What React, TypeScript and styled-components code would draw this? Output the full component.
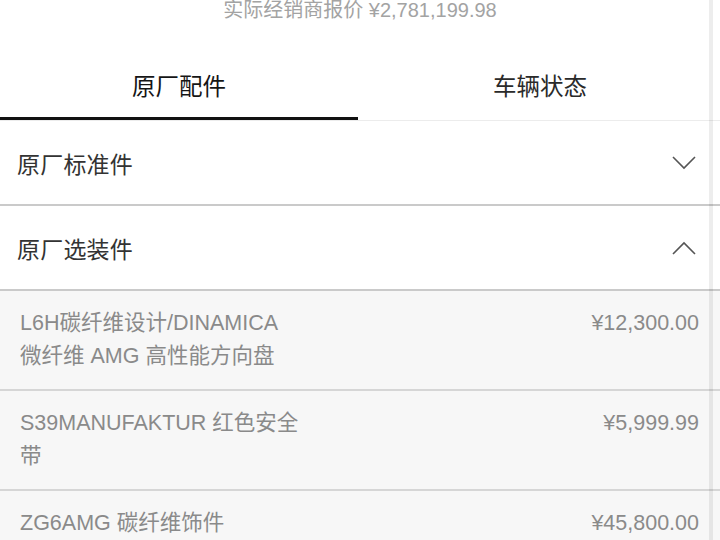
import React from "react";
import styled, { createGlobalStyle } from "styled-components";

const GlobalStyle = createGlobalStyle`
  html, body {
    margin: 0;
    padding: 0;
    background: #ffffff;
  }
  body {
    font-family: "Liberation Sans", "Noto Sans CJK SC", sans-serif;
    overflow: hidden;
  }
`;

const Page = styled.div`
  width: 720px;
  height: 540px;
  overflow: hidden;
  background: #ffffff;
  position: relative;
`;

const PriceLine = styled.div`
  text-align: center;
  font-size: 20px;
  line-height: 21px;
  color: #a3a3a3;
`;

const TabBar = styled.div`
  display: grid;
  grid-template-columns: 1fr 1fr;
  border-bottom: 1px solid #ececec;
`;

const Tab = styled.div<{ $active?: boolean }>`
  text-align: center;
  font-size: 23.5px;
  line-height: 24px;
  padding: 54px 0 18px;
  color: ${(p) => (p.$active ? "#151515" : "#2a2a2a")};
  border-bottom: 3px solid ${(p) => (p.$active ? "#111111" : "transparent")};
  margin-right: ${(p) => (p.$active ? "2px" : "0")};
`;

const SectionRow = styled.div`
  display: flex;
  align-items: center;
  justify-content: space-between;
  height: 83px;
  padding: 0 24px 0 17px;
  border-bottom: 2px solid #cacaca;
  background: #ffffff;
`;

const SectionTitle = styled.span`
  font-size: 23px;
  color: #333333;
  letter-spacing: 0.2px;
`;

const Chevron = styled.svg`
  width: 24px;
  height: 14px;
  display: block;
`;

const ItemList = styled.div`
  background: #f7f7f7;
`;

const ItemRow = styled.div`
  display: flex;
  justify-content: space-between;
  align-items: flex-start;
  padding: 16px 21px 16px 20px;
  border-bottom: 2px solid #d6d6d6;
`;

const ItemName = styled.div`
  font-size: 21.5px;
  line-height: 33px;
  color: #8a8a8a;
  white-space: nowrap;
`;

const ItemPrice = styled.div`
  font-size: 21.5px;
  line-height: 33px;
  color: #8a8a8a;
`;

const ScrollTrack = styled.div`
  position: absolute;
  top: 0;
  bottom: 0;
  right: 7px;
  width: 4px;
  background: rgba(0, 0, 0, 0.07);
  pointer-events: none;
`;

type Item = { lines: string[]; price: string };

const items: Item[] = [
  {
    lines: ["L6H碳纤维设计/DINAMICA", "微纤维 AMG 高性能方向盘"],
    price: "¥12,300.00",
  },
  { lines: ["S39MANUFAKTUR 红色安全", "带"], price: "¥5,999.99" },
  { lines: ["ZG6AMG 碳纤维饰件"], price: "¥45,800.00" },
];

const ChevronIcon = ({ up }: { up?: boolean }) => (
  <Chevron viewBox="0 0 24 14">
    <polyline
      points={up ? "1,13 12,2 23,13" : "1,1 12,12 23,1"}
      fill="none"
      stroke="#555555"
      strokeWidth="1.6"
    />
  </Chevron>
);

const App: React.FC = () => {
  return (
    <Page>
      <GlobalStyle />
      <PriceLine>实际经销商报价 ¥2,781,199.98</PriceLine>
      <TabBar>
        <Tab $active>原厂配件</Tab>
        <Tab>车辆状态</Tab>
      </TabBar>
      <SectionRow>
        <SectionTitle>原厂标准件</SectionTitle>
        <ChevronIcon />
      </SectionRow>
      <SectionRow>
        <SectionTitle>原厂选装件</SectionTitle>
        <ChevronIcon up />
      </SectionRow>
      <ItemList>
        {items.map((item) => (
          <ItemRow key={item.price}>
            <ItemName>
              {item.lines.map((l) => (
                <div key={l}>{l}</div>
              ))}
            </ItemName>
            <ItemPrice>{item.price}</ItemPrice>
          </ItemRow>
        ))}
      </ItemList>
      <ScrollTrack />
    </Page>
  );
};

export default App;
